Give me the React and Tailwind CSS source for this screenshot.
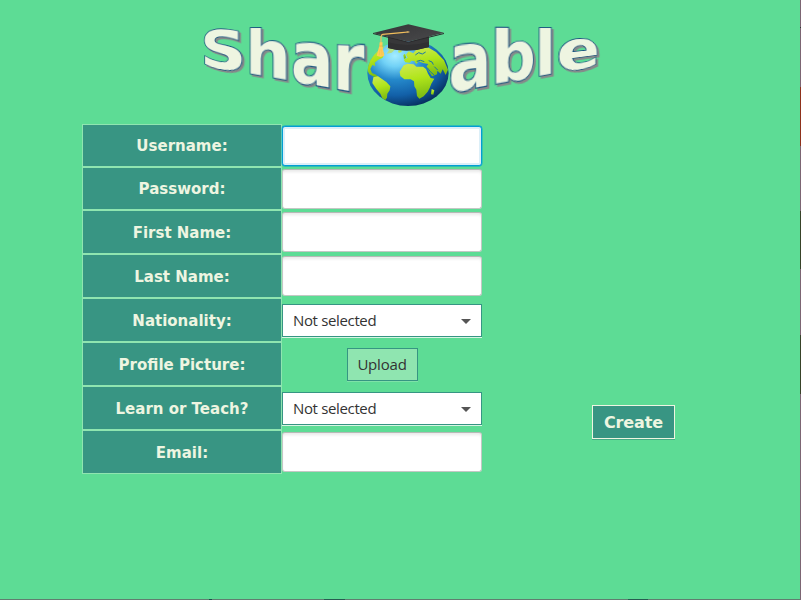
const CELL = 48.6;
const TOP = 28.5;

// Baseline of the lettering falls towards the globe from both sides.
const baseLeft = (x) => 71 + 0.178 * (x - 235);
const baseRight = (x) => 83.4 - 0.185 * (x - 500);

function Letter({ char, x, width, base }) {
  const hl = base(x) - TOP;
  const hr = base(x + width) - TOP;
  const k = hl / hr;
  const g = (k - 1) / width;
  return (
    <span
      className="block h-[48.6px] shrink-0 origin-top-left text-[64px] leading-[53px] font-bold text-[#eef5e1] [paint-order:stroke_fill] [-webkit-text-stroke:1.8px_#1b5580]"
      style={{ width, transform: `matrix3d(${k},0,0,${g},0,${hl / CELL},0,0,0,0,1,0,0,0,0,1)` }}
    >
      {char}
    </span>
  );
}

function Word({ letters, start, base }) {
  let x = start;
  return letters.map(([char, width], i) => {
    const at = x;
    x += width;
    return <Letter key={i} char={char} x={at} width={width} base={base} />;
  });
}

function Globe() {
  return (
    <svg viewBox="0 0 315 300" className="block h-[100px] w-[105px]">
      <defs>
        <radialGradient id="sea" cx="0.34" cy="0.24" r="0.8">
          <stop offset="0" stopColor="#a5edff" />
          <stop offset="0.2" stopColor="#72d2f7" />
          <stop offset="0.45" stopColor="#2589cb" />
          <stop offset="0.75" stopColor="#1260a8" />
          <stop offset="1" stopColor="#07305f" />
        </radialGradient>
        <linearGradient id="land" x1="0" y1="0" x2="0.2" y2="1">
          <stop offset="0" stopColor="#cfe955" />
          <stop offset="0.5" stopColor="#b0e51a" />
          <stop offset="1" stopColor="#7fbd14" />
        </linearGradient>
        <linearGradient id="board" x1="0" y1="0" x2="1" y2="1">
          <stop offset="0" stopColor="#343436" />
          <stop offset="1" stopColor="#4a4a4c" />
        </linearGradient>
        <clipPath id="disc"><ellipse cx="159" cy="174" rx="122" ry="99" /></clipPath>
      </defs>
      <ellipse cx="159" cy="174" rx="122" ry="99" fill="url(#sea)" />
      <g clipPath="url(#disc)" fill="url(#land)">
        <path d="M92 90 L80 105 L88 116 L83 128 L70 134 L59 143 L61 153 L52 150 L46 162 L51 174 L63 179 L70 186 L62 188 L43 178 L34 160 L43 130 L65 107Z" />
        <path d="M94 98 L109 97 L121 103 L110 113 L95 116 L102 105Z" fill="#b5dd85" />
        <path d="M55 187 L69 184 L81 192 L94 201 L106 214 L104 226 L97 236 L96 248 L90 256 L82 250 L76 236 L64 222 L52 204Z" />
        <path d="M146 151 L158 146 L176 148 L184 155 L204 155 L213 162 L219 176 L227 189 L238 191 L229 206 L224 219 L218 230 L206 244 L193 251 L186 243 L184 224 L178 214 L177 199 L167 193 L148 193 L136 183 L134 170Z" />
        <path d="M151 142 L146 134 L158 128 L153 119 L161 109 L175 115 L184 103 L198 96 L221 98 L243 111 L267 136 L279 164 L272 180 L263 163 L257 176 L247 167 L246 178 L231 184 L221 168 L215 154 L220 147 L204 144 L191 139 L184 147 L178 138 L169 137 L164 143Z" />
        <path d="M230 222 L238 226 L235 239 L228 238Z" />
        <path d="M145 120 L150 116 L154 129 L147 132Z M129 107 L139 105 L140 111 L131 113Z" />
      </g>
      <g fill="none" stroke="#1976a8" strokeWidth="3">
        <path d="M181 120 L191 113 L202 117 L212 111" />
        <path d="M185 139 L197 136 L208 140 M221 137 L231 141 L235 149" />
        <path d="M217 158 L226 170 L237 180 M238 155 L248 165" />
      </g>
      <path d="M99 59 L99 99 Q159 116 222 96 L222 60 L160 82Z" fill="#373739" />
      <path d="M99 82 Q159 99 222 80 L222 96 Q159 116 99 99Z" fill="#303032" />
      <path d="M54 54 L160 80 L267 54 L267 57 L160 83 L54 57Z" fill="#2a2a2c" />
      <path d="M54 54 L160 28 L267 53 L160 80Z" fill="url(#board)" />
      <path d="M159 51 L140 53 L83 58 Q78 59 78 66 L78 84" fill="none" stroke="#f0bd5b" strokeWidth="3.5" />
      <ellipse cx="159" cy="51" rx="5" ry="2" fill="#d3ad64" />
      <path d="M74 82 L83 82 L82 92 L88 122 L77 126 L65 122 L73 92Z" fill="#ffcb55" />
      <path d="M72 93 H84" stroke="#e2a64a" strokeWidth="2" />
      <path d="M75 103 L73 121 M80 103 L81 121" stroke="#f0b94e" strokeWidth="1.5" />
    </svg>
  );
}

function TextField({ focused = false }) {
  return (
    <input
      aria-label="value"
      className={
        focused
          ? "block h-10 w-[200px] rounded-[3px] border border-[#039ed3] bg-white shadow-[inset_0_0_0_2px_#dceff8,0_0_0_0.4px_#039ed3] outline-none"
          : "block h-10 w-[200px] rounded-[3px] border border-[#c3c8c4] border-t-[#b5b9b6] bg-white shadow-[inset_0_3px_3px_-1px_#e9e9e9] outline-none"
      }
    />
  );
}

function Select() {
  return (
    <div className="flex h-[33px] w-[200px] items-center justify-between border border-[#369583] bg-white pr-[10px] pl-[10px] shadow-[0_1px_0_#d8f5e4]">
      <span className="font-['Open_Sans',sans-serif] text-[15px] tracking-[-0.35px] text-[#333333]">Not selected</span>
      <svg viewBox="0 0 10 5" className="mt-px h-[5px] w-[10px]"><path d="M0 0H10L5 5Z" fill="#555" /></svg>
    </div>
  );
}

function Row({ label, short = false, children }) {
  return (
    <div className={short ? "flex h-[43px]" : "flex h-11"}>
      <div
        className={`flex w-[200px] items-center justify-center border border-[#8fe5b0] bg-[#389583] text-[15px] leading-none font-bold text-[#eef5e1] ${short ? "pt-px" : "pt-[3px]"}`}
      >
        {label}
      </div>
      <div className="flex w-[200px] items-center justify-center">{children}</div>
    </div>
  );
}

export default function App() {
  return (
    <div className="flex h-[600px] w-[801px] overflow-hidden bg-[#5ddc95] font-['DejaVu_Sans',Verdana,sans-serif]">
      <div className="flex w-[800px] flex-col">
        <header className="flex h-[124px] shrink-0 pl-[200.5px]">
          <div className="flex w-[154.5px] shrink-0 pt-[28.5px] [filter:drop-shadow(2px_2px_0_#85898a)]">
            <Word start={200.5} base={baseLeft} letters={[["S", 45.5], ["h", 44.5], ["a", 42], ["r", 31]]} />
          </div>
          <div className="z-10 shrink-0 pt-[15px]"><Globe /></div>
          <div className="-ml-[11.6px] flex shrink-0 pt-[28.5px] [filter:drop-shadow(2px_2px_0_#85898a)]">
            <Word start={448.4} base={baseRight} letters={[["a", 42], ["b", 44], ["l", 21.7], ["e", 43]]} />
          </div>
        </header>
        <main className="flex h-[475px] shrink-0 pl-[82px]">
          <form className="w-[400px]">
            <Row label="Username:" short><div className="pt-px"><TextField focused /></div></Row>
            <Row label="Password:" short><div className="pt-px"><TextField /></div></Row>
            <Row label="First Name:"><TextField /></Row>
            <Row label="Last Name:"><TextField /></Row>
            <Row label="Nationality:"><div className="pt-px"><Select /></div></Row>
            <Row label="Profile Picture:">
              <div className="pt-px">
                <button type="button" className="block h-[33px] w-[71px] border border-[#369583] bg-[#8fe5b0] font-['Open_Sans',sans-serif] text-[15px] leading-[31px] tracking-[-0.2px] text-[#333333] shadow-[0_1px_0_#7ee2a8]">
                  Upload
                </button>
              </div>
            </Row>
            <Row label="Learn or Teach?"><div className="pt-px"><Select /></div></Row>
            <Row label="Email:"><TextField /></Row>
          </form>
          <div className="pt-[281px] pl-[110px]">
            <button type="button" className="block h-[34px] w-[83px] border border-[#eef5e1] bg-[#389583] text-base leading-[33px] font-bold tracking-[-0.1px] text-[#eef5e1] shadow-[0_1px_0_#47ab86]">
              Create
            </button>
          </div>
        </main>
        <div className="flex h-px shrink-0 bg-[#617d70]">
          <div className="ml-[209px] h-px w-[3px] bg-[#174e47]" />
          <div className="ml-[112px] h-px w-[21px] bg-[#285b50]" />
          <div className="ml-[283px] h-px w-[20px] bg-[#285b50]" />
        </div>
      </div>
      <div className="flex w-px flex-col bg-[#7c6573]">
        <div className="mt-[27px] h-px bg-[#303b32]" />
        <div className="mt-[59px] h-[59px] bg-[#8f311c]" />
        <div className="mt-[65px] h-[58px] bg-[#384329]" />
        <div className="mt-[66px] h-[59px] bg-[#384329]" />
      </div>
    </div>
  );
}
